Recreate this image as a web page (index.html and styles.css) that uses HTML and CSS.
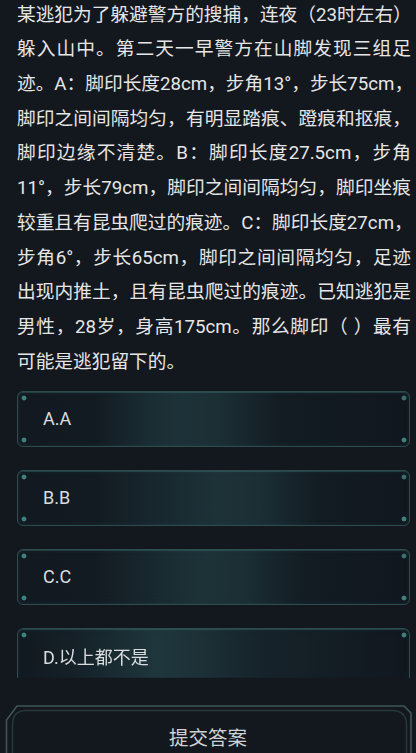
FILE: index.html
```html
<!DOCTYPE html>
<html lang="zh-CN">
<head>
<meta charset="utf-8">
<title>答题</title>
<link rel="stylesheet" href="styles.css">
</head>
<body>
<main class="page">
  <div class="question">
    <span class="line">某逃犯为了躲避警方的搜捕，连夜（23时左右）</span>
    <span class="line">躲入山中。第二天一早警方在山脚发现三组足</span>
    <span class="line">迹。A：脚印长度28cm，步角13°，步长75cm，</span>
    <span class="line">脚印之间间隔均匀，有明显踏痕、蹬痕和抠痕，</span>
    <span class="line">脚印边缘不清楚。B：脚印长度27.5cm，步角</span>
    <span class="line">11°，步长79cm，脚印之间间隔均匀，脚印坐痕</span>
    <span class="line">较重且有昆虫爬过的痕迹。C：脚印长度27cm，</span>
    <span class="line">步角6°，步长65cm，脚印之间间隔均匀，足迹</span>
    <span class="line">出现内推土，且有昆虫爬过的痕迹。已知逃犯是</span>
    <span class="line">男性，28岁，身高175cm。那么脚印（ ）最有</span>
    <span class="line last">可能是逃犯留下的。</span>
  </div>
  <div class="options">
    <div class="option glow-a">A.A</div>
    <div class="option glow-b">B.B</div>
    <div class="option glow-c">C.C</div>
    <div class="option glow-d option-cut">D.以上都不是</div>
  </div>
  <div class="submit">
    <svg class="submit-frame" viewBox="0 0 416 48" width="416" height="48" aria-hidden="true">
      <path d="M6.5 48 V15 L17 1 H404 L411 8 V48" fill="none" stroke="#3e575a" stroke-width="1.6"/>
      <path d="M12.5 48 V20 Q12.5 5.5 26 5.5 H392 Q406.5 5.5 406.5 20 V48" fill="none" stroke="#26393d" stroke-width="1.5"/>
    </svg>
    <span class="submit-label">提交答案</span>
  </div>
</main>
</body>
</html>
```
FILE: styles.css
```css
html, body {
  margin: 0;
  padding: 0;
  height: 100%;
  overflow: hidden;
  background: #13171e;
}

.page {
  display: flex;
  flex-direction: column;
  font-family: "Roboto", "Noto Sans CJK SC", sans-serif;
  color: #e6e6e6;
}

.question {
  display: flex;
  flex-direction: column;
  margin-top: -2.4px;
  padding: 0 5px 0 17px;
  font-size: 18.7px;
  line-height: 34.7px;
}

.line {
  display: block;
  white-space: pre;
  text-align: justify;
  text-align-last: justify;
}

.line.last {
  text-align-last: left;
}

.options {
  display: flex;
  flex-direction: column;
  gap: 23px;
  margin-top: 11.6px;
  padding: 0 6px 0 17px;
}

.option {
  box-sizing: border-box;
  height: 56px;
  display: flex;
  align-items: center;
  padding-left: 25px;
  font-size: 18px;
  color: #d9dde0;
  border: 1.5px solid #2c4c4e;
  border-radius: 6px;
  box-shadow: inset 0 1px 0 rgba(80, 140, 140, 0.28), inset 0 0 5px rgba(50, 110, 110, 0.18);
  --mid: 35%;
  background:
    radial-gradient(circle at 6px 6px, #3f817c 2px, transparent 2.8px),
    radial-gradient(circle at 6px calc(100% - 6px), #3f817c 2px, transparent 2.8px),
    radial-gradient(circle at calc(100% - 5px) 6px, #3a6f6c 2px, transparent 2.8px),
    radial-gradient(circle at calc(100% - 5px) calc(100% - 6px), #3f817c 2px, transparent 2.8px),
    linear-gradient(90deg, #121920 0%, #131b22 20%, #1b2d34 calc(var(--mid) - 8%), #1d3238 var(--mid), #1b2e34 calc(var(--mid) + 10%), #131c23 calc(var(--mid) + 25%), #11171e 100%);
}

.glow-a { --mid: 42%; }
.glow-b { --mid: 52%; }
.glow-c { --mid: 48%; }
.glow-d { --mid: 40%; }

.option-cut {
  border-bottom-color: transparent;
  border-bottom-left-radius: 0;
  border-bottom-right-radius: 0;
  background:
    radial-gradient(circle at 6px 6px, #3f817c 2px, transparent 2.8px),
    radial-gradient(circle at calc(100% - 5px) 6px, #3f817c 2px, transparent 2.8px),
    linear-gradient(90deg, #121920 0%, #152128 15%, #1e363c 35%, #1d3238 45%, #16232a 62%, #11171e 100%);
  -webkit-mask-image: linear-gradient(to bottom, #000 88%, transparent 90%);
  mask-image: linear-gradient(to bottom, #000 88%, transparent 90%);
}

.submit {
  position: relative;
  height: 48px;
  margin-top: 21px;
  display: flex;
  justify-content: center;
  padding-top: 20px;
  box-sizing: border-box;
}

.submit-frame {
  position: absolute;
  left: 0;
  top: 0;
}

.submit-label {
  position: relative;
  font-family: "Noto Sans CJK SC", sans-serif;
  font-size: 19.5px;
  line-height: 24px;
  color: #cfd3d6;
}
```
